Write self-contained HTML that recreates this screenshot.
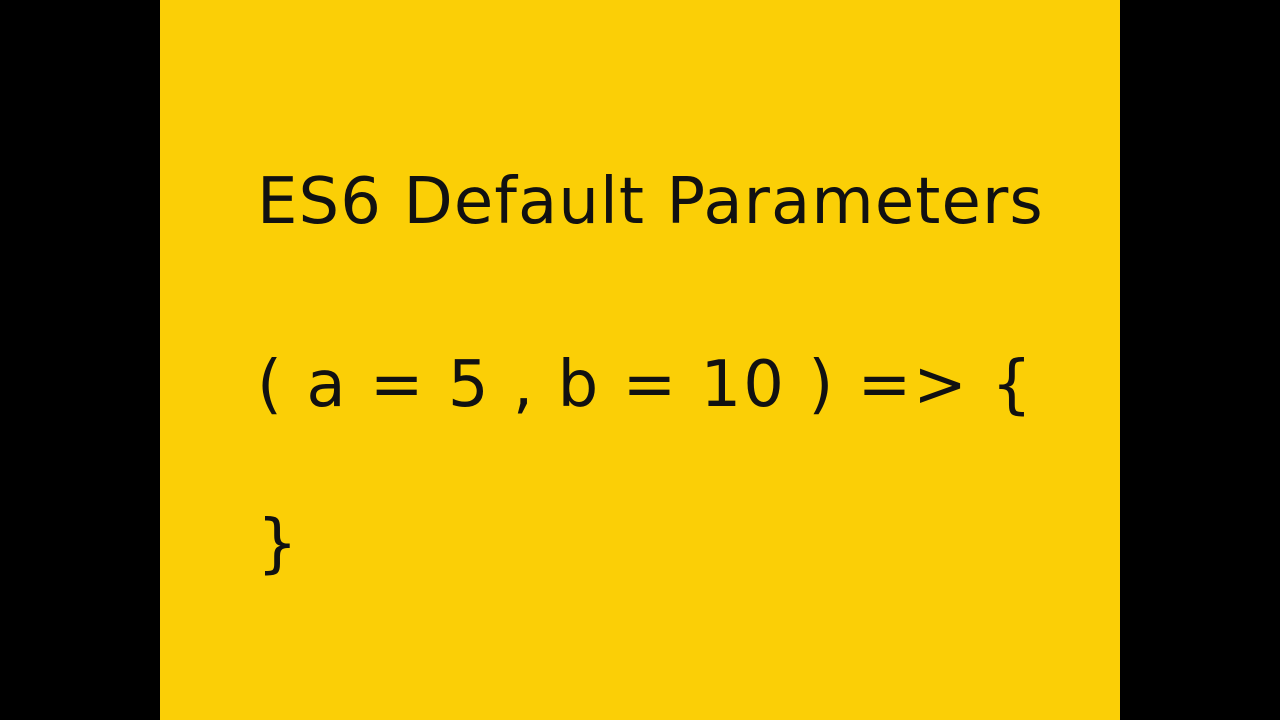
<!DOCTYPE html>
<html><head><style>
html,body{margin:0;padding:0;width:1280px;height:720px;background:#000;overflow:hidden}
#y{position:absolute;left:160px;top:0;width:960px;height:720px;background:#FBCF06}
.t{position:absolute;left:257px;font-family:"DejaVu Sans",sans-serif;color:#111;white-space:pre;line-height:1}
</style></head><body>
<div id="y"></div>
<div class="t" style="top:170px;font-size:64px;letter-spacing:1.1px">ES6 Default Parameters</div>
<div class="t" style="top:353px;font-size:64px;letter-spacing:2px">( a = 5 , b = 10 ) =&gt; {</div>
<div class="t" style="top:512px;font-size:64px">}</div>
</body></html>
